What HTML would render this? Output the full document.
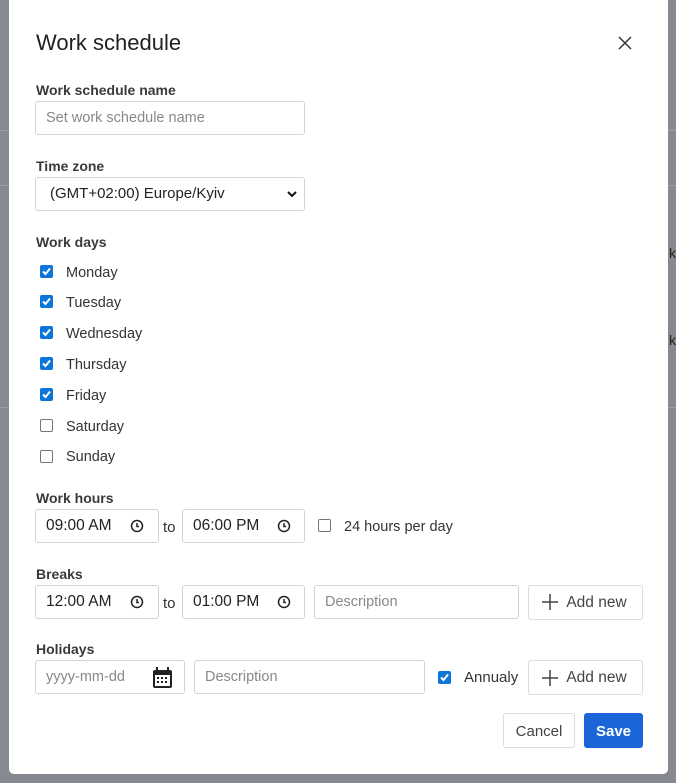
<!DOCTYPE html>
<html><head><style>
*{box-sizing:border-box;margin:0;padding:0}
body{width:676px;height:783px;background:#868990;font-family:"Liberation Sans",Arial,sans-serif;position:relative;overflow:hidden;color:#333}
.bgl{position:absolute;left:0;width:9px;height:1px;background:#9a9da3}
.bgr{position:absolute;left:668px;width:8px;height:1px;background:#9a9da3}
.m{position:absolute;left:9px;top:0;width:659px;height:774px;background:#fff;border-radius:0 0 5px 5px}
.a{position:absolute}
.lbl{position:absolute;left:36px;font-size:14px;font-weight:bold;color:#3a3a3a;line-height:16px}
.inp{position:absolute;border:1px solid #ced4da;border-radius:3px;height:34px;font-size:14.5px;line-height:32px;padding-left:10px;color:#222;background:#fff}
.tm{font-size:15.5px}
.ph{color:#888}
.cb{position:absolute;width:13px;height:13px;border-radius:2px}
.on{background:#0b75d8}
.off{border:1px solid #767676;background:#fff}
.txt{position:absolute;font-size:14.5px;color:#333;line-height:16px}
.btn{position:absolute;border:1px solid #dcdcdc;border-radius:3px;height:35px;font-size:14.5px;color:#444;text-align:center;line-height:33px;background:#fff}
</style></head><body>
<div class="bgl" style="top:130px"></div><div class="bgl" style="top:185px"></div><div class="bgl" style="top:407px"></div>
<div class="bgr" style="top:130px"></div><div class="bgr" style="top:185px"></div><div class="bgr" style="top:407px"></div>
<div class="a" style="left:669px;top:245px;font-size:14px;color:#222">k</div>
<div class="a" style="left:669px;top:332px;font-size:14px;color:#222">k</div>
<div class="m"></div>
<div class="a" style="left:36px;top:30px;font-size:22px;color:#222;line-height:26px">Work schedule</div>
<svg class="a" style="left:617px;top:35px" width="16" height="16" viewBox="0 0 16 16"><path d="M2 2L14 14M14 2L2 14" stroke="#333" stroke-width="1.5"/></svg>
<div class="lbl" style="top:82px">Work schedule name</div>
<div class="inp ph" style="left:35px;top:101px;width:270px">Set work schedule name</div>
<div class="lbl" style="top:158px">Time zone</div>
<div class="inp" style="left:35px;top:177px;width:270px;padding-left:14px;font-size:15px">(GMT+02:00) Europe/Kyiv</div>
<svg class="a" style="left:287px;top:189px" width="10" height="10" viewBox="0 0 10 10"><path d="M1 3L5 7L9 3" stroke="#111" stroke-width="2" fill="none"/></svg>
<div class="lbl" style="top:234px">Work days</div>
<div class="cb on" style="left:40px;top:265px"></div><div class="txt" style="left:66px;top:265px">Monday</div>
<div class="cb on" style="left:40px;top:295px"></div><div class="txt" style="left:66px;top:295px">Tuesday</div>
<div class="cb on" style="left:40px;top:326px"></div><div class="txt" style="left:66px;top:326px">Wednesday</div>
<div class="cb on" style="left:40px;top:357px"></div><div class="txt" style="left:66px;top:357px">Thursday</div>
<div class="cb on" style="left:40px;top:388px"></div><div class="txt" style="left:66px;top:388px">Friday</div>
<div class="cb off" style="left:40px;top:419px"></div><div class="txt" style="left:66px;top:419px">Saturday</div>
<div class="cb off" style="left:40px;top:450px"></div><div class="txt" style="left:66px;top:449px">Sunday</div>
<svg class="a" style="left:40px;top:265px" width="13" height="200" viewBox="0 0 13 200">
<g stroke="#fff" stroke-width="2" fill="none"><path d="M3 6.5L5.5 9L10 3.5"/><path transform="translate(0,30)" d="M3 6.5L5.5 9L10 3.5"/><path transform="translate(0,61)" d="M3 6.5L5.5 9L10 3.5"/><path transform="translate(0,92)" d="M3 6.5L5.5 9L10 3.5"/><path transform="translate(0,123)" d="M3 6.5L5.5 9L10 3.5"/></g></svg>

<div class="lbl" style="top:490px">Work hours</div>
<div class="inp tm" style="left:35px;top:509px;width:124px">09:00 AM</div>
<div class="txt" style="left:163px;top:520px;font-size:15px">to</div>
<div class="inp tm" style="left:182px;top:509px;width:123px">06:00 PM</div>
<div class="cb off" style="left:318px;top:519px"></div><div class="txt" style="left:344px;top:519px">24 hours per day</div>

<div class="lbl" style="top:566px">Breaks</div>
<div class="inp tm" style="left:35px;top:585px;width:124px">12:00 AM</div>
<div class="txt" style="left:163px;top:596px;font-size:15px">to</div>
<div class="inp tm" style="left:182px;top:585px;width:123px">01:00 PM</div>
<div class="inp ph" style="left:314px;top:585px;width:205px">Description</div>
<div class="btn" style="left:528px;top:585px;width:115px;font-size:15.5px;padding-left:22px;line-height:34px">Add new</div>

<div class="lbl" style="top:641px">Holidays</div>
<div class="inp ph" style="left:35px;top:660px;width:150px">yyyy-mm-dd</div>
<div class="inp ph" style="left:194px;top:660px;width:231px">Description</div>
<div class="cb on" style="left:438px;top:671px"></div>
<svg class="a" style="left:438px;top:671px" width="13" height="13"><path d="M3 6.5L5.5 9L10 3.5" stroke="#fff" stroke-width="2" fill="none"/></svg>
<div class="txt" style="left:464px;top:670px;font-size:15px">Annualy</div>
<div class="btn" style="left:528px;top:660px;width:115px;font-size:15.5px;padding-left:22px;line-height:34px">Add new</div>

<svg class="a" style="left:0;top:0" width="676" height="783">
<g fill="none" stroke="#222" stroke-width="1.5">
<circle cx="137" cy="526" r="5.5"/><path d="M137 523v3.5h2"/>
<circle cx="284" cy="526" r="5.5"/><path d="M284 523v3.5h2"/>
<circle cx="137" cy="602" r="5.5"/><path d="M137 599v3.5h2"/>
<circle cx="284" cy="602" r="5.5"/><path d="M284 599v3.5h2"/>
</g>
<g stroke="#444" stroke-width="1.5"><path d="M550 594v16M542 602h16M550 670v16M542 678h16"/></g>
<rect x="153" y="670" width="19" height="18" rx="2" fill="#222"/>
<rect x="155" y="675" width="15" height="11" fill="#fff"/>
<g fill="#222"><rect x="157" y="677" width="2" height="2"/><rect x="161" y="677" width="2" height="2"/><rect x="165" y="677" width="2" height="2"/><rect x="157" y="681" width="2" height="2"/><rect x="161" y="681" width="2" height="2"/><rect x="165" y="681" width="2" height="2"/><rect x="156" y="667" width="2" height="4"/><rect x="167" y="667" width="2" height="4"/></g>
</svg>

<div class="btn" style="left:503px;top:713px;width:72px;font-size:15px;line-height:35px">Cancel</div>
<div class="btn" style="left:584px;top:713px;width:59px;background:#1a66d9;border-color:#1a66d9;color:#fff;font-weight:bold;font-size:15px;line-height:35px">Save</div>
</body></html>
